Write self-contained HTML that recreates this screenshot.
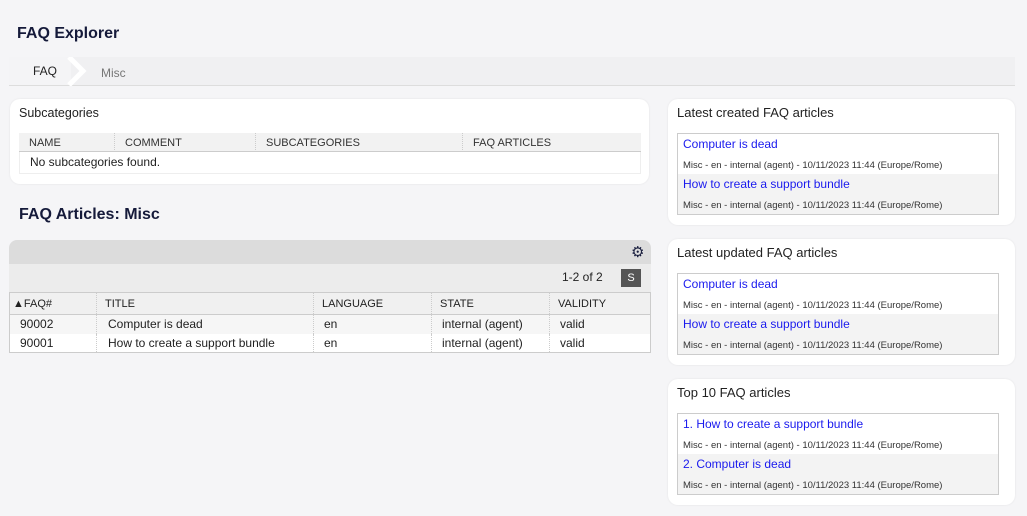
<!DOCTYPE html><html><head><style>
*{margin:0;padding:0;box-sizing:border-box}
body{width:1027px;height:516px;background:#f5f5f7;font-family:"Liberation Sans",sans-serif;color:#222;position:relative;overflow:hidden;font-size:12px}
.a{position:absolute}
h1{position:absolute;font-size:16px;font-weight:bold;color:#151a3a}
.box{position:absolute;background:#fff;border-radius:10px;box-shadow:0 0 2px rgba(0,0,0,.08)}
.bt{position:absolute;left:9px;top:6px;font-size:13px;color:#222}
.th{position:absolute;font-size:11px;color:#333;top:4px}
.list{position:absolute;left:9px;top:34px;width:322px;height:82px;border:1px solid #ccc}
.it{height:40px;padding:3px 0 0 5px}
.it a{color:#1a1aee;font-size:12px;text-decoration:none;display:block;height:20px}
.it span{font-size:9.5px;color:#333}
.g{background:#f3f3f3}
td{font-size:12px;padding:0 8px;height:19px;border-right:1px dotted #ccc}
</style></head><body>
<h1 style="left:17px;top:25px">FAQ Explorer</h1>
<div class="a" style="left:9px;top:57px;width:1006px;height:29px;background:#f0f0f2;border-bottom:1px solid #ddd"></div>
<div class="a" style="left:9px;top:57px;width:62px;height:28px;background:#f4f4f6"></div>
<svg class="a" style="left:66px;top:57px" width="24" height="29"><polyline points="3,0 17,14 3,28" fill="none" stroke="#fff" stroke-width="5"/></svg>
<div class="a" style="left:33px;top:64px;font-size:12px;color:#222">FAQ</div>
<div class="a" style="left:101px;top:66px;font-size:12px;color:#777">Misc</div>

<div class="box" style="left:10px;top:99px;width:639px;height:85px">
<div class="bt" style="font-size:12.5px;top:7px">Subcategories</div>
<div class="a" style="left:9px;top:34px;width:622px;height:41px;border:1px solid #eee;border-top:none"></div>
<div class="a" style="left:9px;top:34px;width:622px;height:19px;background:#f2f2f2;border-bottom:1px solid #ccc">
<div class="th" style="left:10px">NAME</div><div class="th" style="left:106px">COMMENT</div><div class="th" style="left:247px">SUBCATEGORIES</div><div class="th" style="left:454px">FAQ ARTICLES</div>
<div class="a" style="left:95px;top:0;height:19px;border-left:1px dotted #ccc"></div><div class="a" style="left:236px;top:0;height:19px;border-left:1px dotted #ccc"></div><div class="a" style="left:443px;top:0;height:19px;border-left:1px dotted #ccc"></div>
</div>
<div class="a" style="left:20px;top:56px;font-size:12px">No subcategories found.</div>
</div>

<h1 style="left:19px;top:206px">FAQ Articles: Misc</h1>
<div class="a" style="left:9px;top:240px;width:642px;height:24px;background:#dcdcdc;border-radius:8px 8px 0 0"></div>
<div class="a" style="left:631px;top:243px;font-size:15px;color:#1a1f3f">⚙</div>
<div class="a" style="left:9px;top:264px;width:642px;height:28px;background:#ececec"></div>
<div class="a" style="left:562px;top:270px;font-size:12px">1-2 of 2</div>
<div class="a" style="left:621px;top:269px;width:20px;height:18px;background:#555;color:#fff;font-size:11px;text-align:center;line-height:18px">S</div>
<table class="a" style="left:9px;top:292px;width:642px;border-collapse:collapse;border:1px solid #ccc;table-layout:fixed">
<col style="width:87px"><col style="width:217px"><col style="width:118px"><col style="width:118px"><col>
<tr style="background:#f0f0f0;height:22px;border-bottom:1px solid #ccc"><td style="font-size:11px;padding-left:3px">▲FAQ#</td><td style="font-size:11px">TITLE</td><td style="font-size:11px">LANGUAGE</td><td style="font-size:11px">STATE</td><td style="font-size:11px">VALIDITY</td></tr>
<tr style="background:#f6f6f6"><td style="padding-left:10px">90002</td><td style="padding-left:11px">Computer is dead</td><td style="padding-left:10px">en</td><td style="padding-left:10px">internal (agent)</td><td style="padding-left:10px">valid</td></tr>
<tr style="background:#fff"><td style="padding-left:10px">90001</td><td style="padding-left:11px">How to create a support bundle</td><td style="padding-left:10px">en</td><td style="padding-left:10px">internal (agent)</td><td style="padding-left:10px">valid</td></tr>
</table>

<div class="box" style="left:668px;top:99px;width:347px;height:126px"><div class="bt">Latest created FAQ articles</div>
<div class="list"><div class="it"><a>Computer is dead</a><span>Misc - en - internal (agent) - 10/11/2023 11:44 (Europe/Rome)</span></div><div class="it g"><a>How to create a support bundle</a><span>Misc - en - internal (agent) - 10/11/2023 11:44 (Europe/Rome)</span></div></div></div>
<div class="box" style="left:668px;top:239px;width:347px;height:126px"><div class="bt">Latest updated FAQ articles</div>
<div class="list"><div class="it"><a>Computer is dead</a><span>Misc - en - internal (agent) - 10/11/2023 11:44 (Europe/Rome)</span></div><div class="it g"><a>How to create a support bundle</a><span>Misc - en - internal (agent) - 10/11/2023 11:44 (Europe/Rome)</span></div></div></div>
<div class="box" style="left:668px;top:379px;width:347px;height:126px"><div class="bt">Top 10 FAQ articles</div>
<div class="list"><div class="it"><a>1. How to create a support bundle</a><span>Misc - en - internal (agent) - 10/11/2023 11:44 (Europe/Rome)</span></div><div class="it g"><a>2. Computer is dead</a><span>Misc - en - internal (agent) - 10/11/2023 11:44 (Europe/Rome)</span></div></div></div>
</body></html>
